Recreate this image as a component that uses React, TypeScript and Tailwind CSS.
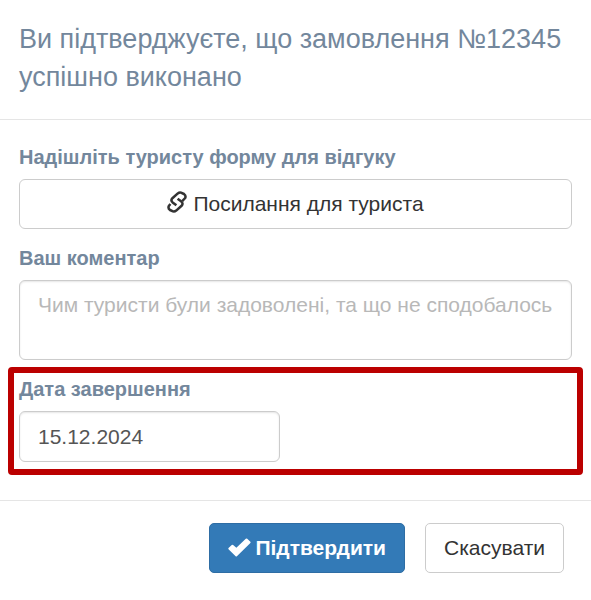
import { useState } from 'react'

function LinkIcon() {
  return (
    <svg viewBox="0 0 20 22" className="w-5 h-[22px] shrink-0 -mt-1" fill="none" stroke="currentColor" strokeWidth="2.5" strokeLinejoin="round" aria-hidden="true">
      <path d="M9.4 14.2L5.6 11.4Q3.4 9.2 5.4 7.2L10.8 2.4Q12.3 1.2 14 1.6L17 3Q19.2 4.6 18.2 7L15.2 10.2" />
      <path d="M10.6 7.8L14.4 10.6Q16.6 12.8 14.6 14.8L9.2 19.6Q7.7 20.8 6 20.4L3 19Q0.8 17.4 1.8 15L3.4 13" />
    </svg>
  )
}

function CheckIcon() {
  return (
    <svg viewBox="0 0 22 20" className="w-[23px] h-5 shrink-0" fill="currentColor" preserveAspectRatio="none" aria-hidden="true">
      <path d="M0.5 10L3.6 6.9Q4.3 6.4 4.9 6.9L8 9.7L17 0.7Q17.7 0.1 18.4 0.7L21.4 3.7Q21.9 4.3 21.4 4.9L8.5 18.3Q7.9 18.8 7.3 18.3L0.5 11.2Q0 10.6 0.5 10Z" />
    </svg>
  )
}

const labelClass = 'block mb-[7px] text-xl leading-[30px] font-bold text-[#73879c]'
const fieldClass = 'block rounded-md border border-[#cccccc] px-[18px] text-[21px] leading-[30px] text-[#555555] shadow-[inset_0_1px_2px_rgba(0,0,0,0.1)]'

export default function App() {
  const [comment, setComment] = useState('')
  const [date, setDate] = useState('15.12.2024')

  return (
    <form
      className="min-h-screen bg-white font-['Liberation_Sans',Arial,sans-serif]"
      onSubmit={(e) => e.preventDefault()}
    >
      <header className="px-[19px] pt-5 pb-[23px] border-b border-[#e5e5e5]">
        <h1 className="text-[27px] leading-[38px] text-[#73879c]">
          Ви підтверджуєте, що замовлення №12345 успішно виконано
        </h1>
      </header>

      <div className="px-[19px] pt-[22px] pb-[25px] border-b border-[#e5e5e5]">
        <label htmlFor="review-link" className={labelClass}>Надішліть туристу форму для відгуку</label>
        <button
          id="review-link"
          type="button"
          className="flex w-full h-[50px] items-center justify-center gap-1.5 rounded-md border border-[#cccccc] bg-white text-[21px] leading-[30px] text-[#333333]"
        >
          <LinkIcon />
          Посилання для туриста
        </button>

        <div className="mt-3.5">
          <label htmlFor="comment" className={labelClass}>Ваш коментар</label>
          <textarea
            id="comment"
            value={comment}
            onChange={(e) => setComment(e.target.value)}
            placeholder="Чим туристи були задоволені, та що не сподобалось"
            className={`${fieldClass} w-full h-20 pt-[9px] resize-none overflow-hidden placeholder:text-[#b8b8b8]`}
          />
        </div>

        <div className="mt-[7px] -mx-[11px] rounded border-6 border-[#bb0000] px-[5px] pt-px pb-[7px]">
          <label htmlFor="finish-date" className={labelClass}>Дата завершення</label>
          <input
            id="finish-date"
            type="text"
            value={date}
            onChange={(e) => setDate(e.target.value)}
            className={`${fieldClass} w-[261px] h-[51px]`}
          />
        </div>
      </div>

      <footer className="flex justify-end gap-5 pl-[19px] pr-[27px] pt-[22px] pb-[27px]">
        <button
          type="submit"
          className="flex h-[50px] items-center gap-1 rounded-[5px] border border-[#2e6da4] bg-[#337ab7] px-[18px] text-[21px] leading-[30px] font-bold text-white"
        >
          <CheckIcon />
          Підтвердити
        </button>
        <button
          type="button"
          className="h-[50px] rounded-[5px] border border-[#cccccc] bg-white px-[18px] text-[21px] leading-[30px] text-[#333333]"
        >
          Скасувати
        </button>
      </footer>
    </form>
  )
}
